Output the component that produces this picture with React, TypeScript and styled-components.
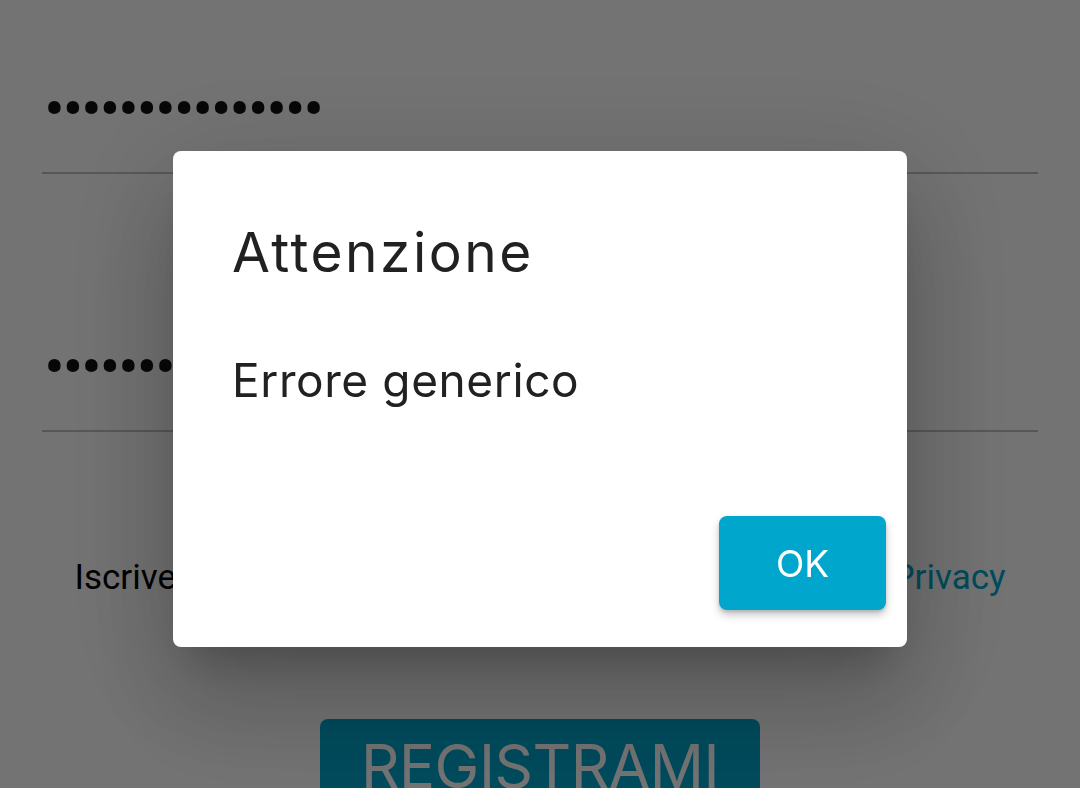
import React from 'react';
import { createGlobalStyle, styled } from 'styled-components';

const teal = '#00a6cc';

const GlobalStyle = createGlobalStyle`
  html, body {
    margin: 0;
    padding: 0;
    background: #ffffff;
    overflow: hidden;
  }
  body {
    font-family: Roboto, "Liberation Sans", sans-serif;
  }
`;

const PageStyled = styled.div`
  height: 788px;
  padding: 0 42px;
  box-sizing: border-box;
  display: flex;
  flex-direction: column;
`;

const FieldStyled = styled.div<{ offset: number }>`
  padding-top: ${({ offset }) => offset}px;
`;

const MaskedValue = styled.div`
  font-family: Roboto, sans-serif;
  font-size: 62px;
  line-height: 60px;
  height: 60px;
  color: #111111;
  letter-spacing: -2.4px;
  padding-left: 2px;
  white-space: nowrap;
`;

const Underline = styled.div`
  margin-top: 33px;
  height: 2px;
  background: #c2c2c2;
`;

const Caption = styled.p`
  margin: 125px 0 0;
  text-align: center;
  font-family: Roboto, sans-serif;
  font-size: 35px;
  line-height: 42px;
  color: #000000;
  white-space: nowrap;

  a {
    color: ${teal};
    text-decoration: none;
  }
`;

const RegisterButton = styled.button`
  align-self: center;
  margin-top: 120px;
  width: 440px;
  height: 130px;
  padding: 11px 0 0;
  border: none;
  border-radius: 8px;
  background: ${teal};
  color: #ffffff;
  font-family: Inter, sans-serif;
  font-size: 60px;
  line-height: 72px;
  letter-spacing: -0.5px;
  display: flex;
  justify-content: center;
  align-items: flex-start;
`;

const Overlay = styled.div`
  position: fixed;
  inset: 0;
  background: rgba(0, 0, 0, 0.55);
  display: flex;
  align-items: center;
  justify-content: center;
  padding-top: 10px;
  box-sizing: border-box;
`;

const Dialog = styled.div`
  width: 734px;
  background: #ffffff;
  border-radius: 8px;
  padding: 68px 21px 37px 0;
  box-sizing: border-box;
  display: flex;
  flex-direction: column;
  box-shadow:
    0 62px 100px 8px rgba(0, 0, 0, 0.14),
    0 24px 120px 21px rgba(0, 0, 0, 0.12),
    0 29px 39px -18px rgba(0, 0, 0, 0.2);
`;

const DialogTitle = styled.h2`
  margin: 0;
  padding-left: 59px;
  font-family: Inter, sans-serif;
  font-weight: 400;
  font-size: 55px;
  line-height: 66px;
  letter-spacing: 2.5px;
  color: #212121;
`;

const DialogBody = styled.p`
  margin: 68px 0 0;
  padding-left: 59px;
  font-family: Inter, sans-serif;
  font-size: 46px;
  line-height: 55px;
  letter-spacing: 0.6px;
  color: #212121;
`;

const DialogActions = styled.div`
  margin-top: 108px;
  display: flex;
  justify-content: flex-end;
`;

const OkButton = styled.button`
  width: 167px;
  height: 94px;
  border: none;
  border-radius: 8px;
  background: ${teal};
  color: #ffffff;
  font-family: Inter, sans-serif;
  font-size: 37px;
  padding: 0;
  box-shadow:
    0 5px 8px rgba(0, 0, 0, 0.22),
    0 2px 3px rgba(0, 0, 0, 0.12);
`;

const dots = '•'.repeat(15);

const App = () => (
  <>
    <GlobalStyle />
    <PageStyled>
      <FieldStyled offset={79}>
        <MaskedValue>{dots}</MaskedValue>
        <Underline />
      </FieldStyled>
      <FieldStyled offset={163}>
        <MaskedValue>{dots}</MaskedValue>
        <Underline />
      </FieldStyled>
      <Caption>
        Iscrivendoti accetti i termini generali del servizio e la <a>Privacy</a>
      </Caption>
      <RegisterButton type="button">REGISTRAMI</RegisterButton>
    </PageStyled>
    <Overlay>
      <Dialog role="dialog">
        <DialogTitle>Attenzione</DialogTitle>
        <DialogBody>Errore generico</DialogBody>
        <DialogActions>
          <OkButton type="button">OK</OkButton>
        </DialogActions>
      </Dialog>
    </Overlay>
  </>
);

export default App;
